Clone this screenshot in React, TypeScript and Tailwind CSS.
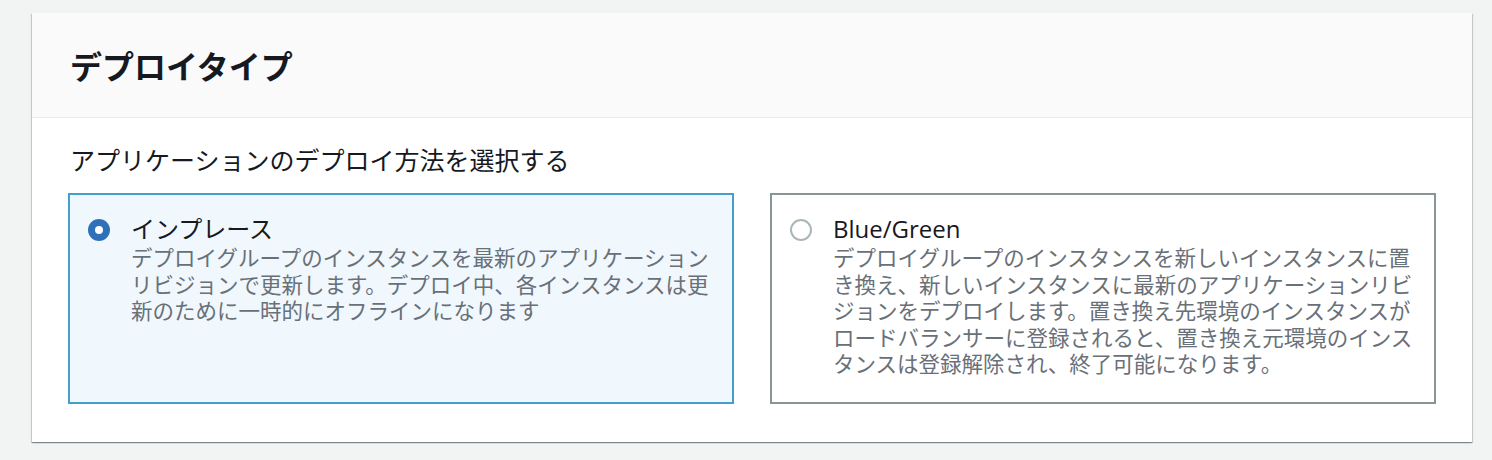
import React, { useState } from 'react';

type Option = {
  id: string;
  label: string;
  description: string;
};

const options: Option[] = [
  {
    id: 'in-place',
    label: 'インプレース',
    description:
      'デプロイグループのインスタンスを最新のアプリケーションリビジョンで更新します。デプロイ中、各インスタンスは更新のために一時的にオフラインになります',
  },
  {
    id: 'blue-green',
    label: 'Blue/Green',
    description:
      'デプロイグループのインスタンスを新しいインスタンスに置き換え、新しいインスタンスに最新のアプリケーションリビジョンをデプロイします。置き換え先環境のインスタンスがロードバランサーに登録されると、置き換え元環境のインスタンスは登録解除され、終了可能になります。',
  },
];

// Radio tile for a deploy option
const OptionTile = ({ option, selected, onSelect }: { option: Option; selected: boolean; onSelect: () => void }) => {
  return (
    <div
      onClick={onSelect}
      className={
        selected
          ? 'flex gap-[21px] border-2 border-[#449fcb] bg-[#f0f7fd] pl-[18px] pr-[10px] pt-[19px] pb-[24px] cursor-pointer'
          : 'flex gap-[21px] border-2 border-[#879596] bg-white pl-[18px] pr-[10px] pt-[19px] pb-[24px] cursor-pointer'
      }
    >
      <div className="pt-[5px] shrink-0">
        {selected ? (
          <div className="w-[22px] h-[22px] rounded-full border-[7px] border-[#2f71b9] bg-white" />
        ) : (
          <div className="w-[22px] h-[22px] rounded-full border-2 border-[#aab7b8] bg-white" />
        )}
      </div>
      <div className="flex flex-col min-w-0">
        <div className="text-[24px] leading-[30px] text-[#16191f]">{option.label}</div>
        <p className="mt-[1px] text-[21.5px] leading-[26.5px] text-[#687078]">{option.description}</p>
      </div>
    </div>
  );
};

export default function App() {
  const [selected, setSelected] = useState('in-place');

  return (
    <div
      className="min-h-[460px] bg-[#f2f3f3] pt-[13px] pl-[32px] pr-[20px] pb-[18px]"
      style={{ fontFamily: '"Open Sans", "Noto Sans CJK JP", sans-serif' }}
    >
      <div className="bg-white shadow-[0_1px_1px_0_rgba(0,28,36,0.3),1px_1px_1px_0_rgba(0,28,36,0.15),-1px_1px_1px_0_rgba(0,28,36,0.15)]">
        <div className="h-[105px] flex items-center px-[38px] bg-[#fafafa] border-b border-[#eaeded]">
          <h2 className="text-[32px] font-bold text-[#16191f]" style={{ fontFamily: '"Noto Sans CJK JP", sans-serif' }}>
            デプロイタイプ
          </h2>
        </div>
        <div className="px-[36px] pt-[27px] pb-[38px]">
          <div className="text-[25px] leading-[30px] text-[#16191f] pl-[2px]">アプリケーションのデプロイ方法を選択する</div>
          <div className="mt-[18px] grid grid-cols-2 gap-[36px]">
            {options.map((o) => (
              <OptionTile key={o.id} option={o} selected={selected === o.id} onSelect={() => setSelected(o.id)} />
            ))}
          </div>
        </div>
      </div>
    </div>
  );
}
